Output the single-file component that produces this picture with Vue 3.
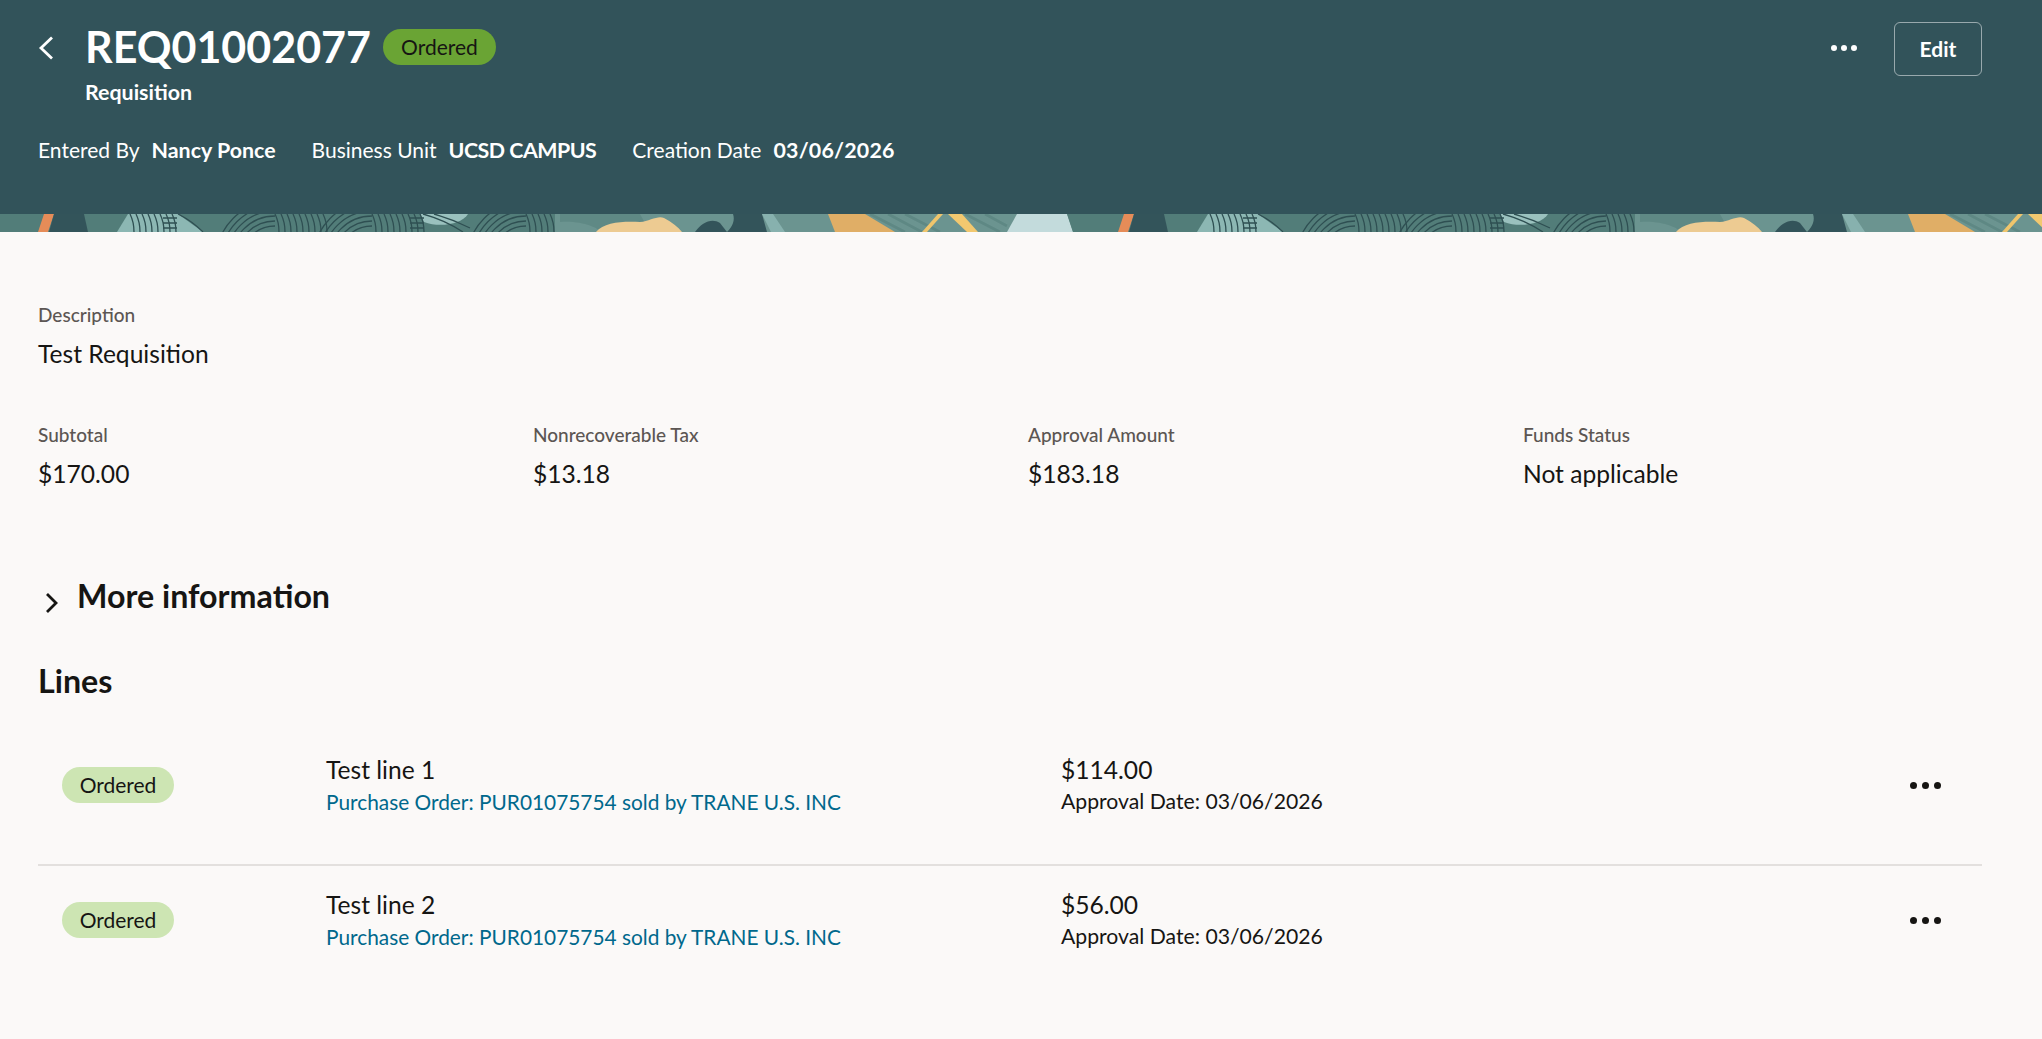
<template>
  <div class="page">
    <header class="hero">
      <div class="hero__top">
        <button class="hero__back" type="button" aria-label="Back">
          <svg width="16" height="24" viewBox="0 0 16 24"><path d="M14 1.5 3 12l11 10.5" fill="none" stroke="#fff" stroke-width="2.8" /></svg>
        </button>
        <div class="hero__titles">
          <div class="hero__title-row">
            <h1 class="hero__title">REQ01002077</h1>
            <span class="badge badge--strong">Ordered</span>
          </div>
          <div class="hero__subtitle">Requisition</div>
        </div>
        <div class="hero__actions">
          <button class="dots dots--light" type="button" aria-label="More actions"><i></i><i></i><i></i></button>
          <button class="hero__edit" type="button">Edit</button>
        </div>
      </div>
      <div class="hero__meta">
        <span v-for="item in meta" :key="item.label" class="hero__meta-item">
          {{ item.label }}<b>{{ item.value }}</b>
        </span>
      </div>
    </header>

    <svg class="strip" width="100%" height="18" aria-hidden="true">
      <defs>
        <pattern id="tile" width="1080" height="18" patternUnits="userSpaceOnUse">
          <rect width="555" height="18" fill="#527d79" />
          <rect x="555" width="525" height="18" fill="#6b9490" />
          <path d="M1017 0H1067L1073 18H1007Z" fill="#c3dbdc" />
          <path d="M1067 0H1080V18H1073Z" fill="#527d79" />
          <path d="M44 0H54L48 18H38Z" fill="#e68c58" />
          <path d="M54 0H84L88 18H49Z" fill="#33545a" />
          <path d="M128 0H178L203 18H117Z" fill="#8cb7b3" />
          <path d="M420 0H468C462 10 440 14 424 8Z" fill="#9ac1be" />
          <path d="M560 0H640L650 18H600C600 14 580 6 560 8Z" fill="#5f8985" />
          <path d="M596 18C604 8 624 7 640 8 650 7 658 1 664 4 672 8 678 13 682 18Z" fill="#edcb92" />
          <path d="M695 18C702 8 712 4 720 9L727 18Z" fill="#33545a" />
          <path d="M733 0H762L767 18H727C733 12 735 6 733 0Z" fill="#33545a" />
          <path d="M762 0H773L785 18H771Z" fill="#87b1ae" />
          <path d="M828 0H865L895 18H835Z" fill="#e0ae66" />
          <g stroke="#5b8581" stroke-width="3" opacity=".8">
            <path d="M870 0 905 18M888 0 922 18M905 0 940 18M965 0 1000 18M985 0 1007 12" />
          </g>
          <path d="M938 0H943L927 18H922Z" fill="#efc56c" />
          <path d="M948 0H962L978 18H967Z" fill="#f2c86f" />
          <g fill="none" stroke="#2e4f52" stroke-width="1.3">
            <path v-for="(d, i) in prints" :key="i" :d="d" />
          </g>
        </pattern>
      </defs>
      <rect width="100%" height="18" fill="url(#tile)" />
    </svg>

    <main class="content">
      <div class="field field--description">
        <div class="field__label">Description</div>
        <div class="field__value">Test Requisition</div>
      </div>

      <div class="summary">
        <div v-for="item in summary" :key="item.label" class="field">
          <div class="field__label">{{ item.label }}</div>
          <div class="field__value">{{ item.value }}</div>
        </div>
      </div>

      <div class="more">
        <svg width="13" height="20" viewBox="0 0 13 20"><path d="M2 1 11 10 2 19" fill="none" stroke="#161513" stroke-width="2.8" /></svg>
        <h2 class="heading">More information</h2>
      </div>

      <h2 class="heading heading--lines">Lines</h2>

      <div class="lines">
        <div v-for="line in lines" :key="line.title" class="line">
          <div class="line__status"><span class="badge">Ordered</span></div>
          <div class="line__main">
            <div class="line__title">{{ line.title }}</div>
            <a class="line__link">Purchase Order: PUR01075754 sold by TRANE U.S. INC</a>
          </div>
          <div class="line__amount">
            <div class="line__title">{{ line.amount }}</div>
            <div class="line__date">Approval Date: 03/06/2026</div>
          </div>
          <button class="dots" type="button" aria-label="Line actions"><i></i><i></i><i></i></button>
        </div>
      </div>
    </main>
  </div>
</template>

<script setup>
const meta = [
  { label: 'Entered By', value: 'Nancy Ponce' },
  { label: 'Business Unit', value: 'UCSD CAMPUS' },
  { label: 'Creation Date', value: '03/06/2026' }
];

const summary = [
  { label: 'Subtotal', value: '$170.00' },
  { label: 'Nonrecoverable Tax', value: '$13.18' },
  { label: 'Approval Amount', value: '$183.18' },
  { label: 'Funds Status', value: 'Not applicable' }
];

const lines = [
  { title: 'Test line 1', amount: '$114.00' },
  { title: 'Test line 2', amount: '$56.00' }
];

// the fingerprint swirls in the banner: arcs on the left, hatching on the right
const swirls = [
  { cx: 130, arcs: false, end: 177 },
  { cx: 275, arcs: true, end: 329 },
  { cx: 372, arcs: true, end: 424 },
  { cx: 526, arcs: true, end: 555 }
];
const prints = [];
for (const { cx, arcs, end } of swirls) {
  if (arcs) {
    for (let r = 34; r <= 60; r += 5) {
      prints.push(`M${cx - r} 46A${r} ${r} 0 0 1 ${cx} ${46 - r}`);
    }
  }
  for (let x = cx; x < end; x += 6) {
    prints.push(`M${x} 0C${x + 3} 6 ${x + 4} 12 ${x + 4} 18`);
  }
}
// crosshatch and the curves falling off to the right
for (const x of [163, 410]) {
  prints.push(`M${x} 4H${x + 14}M${x} 9H${x + 14}M${x} 14H${x + 14}`);
}
prints.push('M178 0Q192 7 203 18', 'M423 0Q445 6 463 18', 'M434 0Q452 5 470 14');
</script>

<style scoped>
.page {
  min-height: 1039px;
  background: #fbf9f8;
  color: #161513;
  font-family: Lato, "Noto Sans", sans-serif;
}

button {
  font-family: inherit;
  background: none;
  border: none;
  padding: 0;
  cursor: pointer;
}

.hero {
  height: 214px;
  box-sizing: border-box;
  background: #32535a;
  color: #fff;
  padding: 22px 60px 0 38px;
}

.hero__top {
  display: flex;
  align-items: flex-start;
}

.hero__back {
  width: 47px;
  height: 54px;
  display: flex;
  align-items: center;
}

.hero__back svg {
  margin-top: -2px;
}

.hero__titles {
  flex: 1;
}

.hero__title-row {
  display: flex;
  align-items: center;
  gap: 12px;
  height: 50px;
}

.hero__title {
  margin: 0;
  font-size: 43px;
  font-weight: 700;
  line-height: 50px;
}

.hero__subtitle {
  margin-top: 8px;
  font-size: 21.4px;
  font-weight: 700;
  line-height: 24px;
}

.hero__actions {
  display: flex;
  align-items: center;
  gap: 37px;
}

.hero__edit {
  width: 88px;
  height: 54px;
  box-sizing: border-box;
  padding-bottom: 2px;
  border: 1px solid rgba(255, 255, 255, 0.5);
  border-radius: 6px;
  color: #fff;
  font-size: 21px;
  font-weight: 700;
}

.hero__meta {
  display: flex;
  gap: 36px;
  margin-top: 32px;
  font-size: 21px;
  line-height: 28px;
}

.hero__meta-item b {
  margin-left: 12px;
  font-size: 21.4px;
}

.hero__meta-item:nth-child(2) b {
  letter-spacing: -0.5px;
}

.hero__meta-item:nth-child(3) b {
  letter-spacing: 0.2px;
}

.strip {
  display: block;
}

.badge {
  display: inline-flex;
  align-items: center;
  justify-content: center;
  width: 112px;
  height: 36px;
  padding-bottom: 2px;
  box-sizing: border-box;
  border-radius: 18px;
  background: #cde5b3;
  color: #161513;
  font-size: 21px;
}

.badge--strong {
  width: 113px;
  background: #6aa434;
}

.dots {
  display: flex;
  align-items: center;
  gap: 5px;
}

.dots i {
  width: 7px;
  height: 7px;
  border-radius: 50%;
  background: #161513;
}

.dots--light {
  gap: 4px;
  margin-top: -2px;
}

.dots--light i {
  width: 6px;
  height: 6px;
  background: #fff;
}

.content {
  padding: 71px 60px 0 38px;
}

.field__label {
  font-size: 19px;
  font-weight: 500;
  line-height: 24px;
  color: #5c5653;
}

.field__value {
  margin-top: 12px;
  font-size: 24.6px;
  line-height: 30px;
}

.summary {
  display: grid;
  grid-template-columns: repeat(4, 495px);
  margin-top: 54px;
}

.more {
  display: flex;
  align-items: center;
  gap: 19px;
  margin-top: 88px;
  padding-left: 7px;
}

.more svg {
  margin-top: 14px;
}

.heading {
  margin: 0;
  font-size: 32.2px;
  font-weight: 700;
  line-height: 38px;
}

.heading--lines {
  margin-top: 47px;
}

.lines {
  margin-top: 31px;
}

.line {
  display: flex;
  align-items: center;
  padding: 23px 0 47px;
  border-bottom: 2px solid #e3e0de;
}

.line:last-child {
  border-bottom: none;
}

.line__status {
  width: 288px;
  padding-left: 24px;
  box-sizing: border-box;
  margin-top: -1px;
}

.line__main {
  width: 735px;
}

.line__amount {
  flex: 1;
}

.line__title {
  font-size: 24.6px;
  line-height: 32px;
}

.line__link {
  display: block;
  font-size: 20.85px;
  line-height: 31px;
  color: #00688c;
}

.line__date {
  font-size: 21.2px;
  line-height: 31px;
}

.line > .dots {
  margin-right: 41px;
}
</style>

<style>
html,
body {
  background: #fbf9f8;
}
</style>
